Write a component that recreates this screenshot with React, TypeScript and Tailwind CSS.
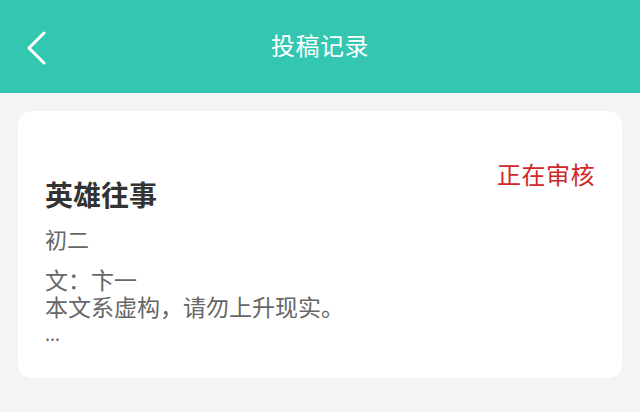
import React from 'react';

const font = { fontFamily: '"Noto Sans CJK SC", "Noto Sans", sans-serif' };

const App: React.FC = () => {
  return (
    <div className="w-[640px] h-[412px] bg-[#f4f4f4] overflow-hidden" style={font}>
      <header className="relative h-[93px] bg-[#33c7b1] flex items-center justify-center">
        <button className="absolute left-[26px] top-[31px] w-[22px] h-[34px]">
          <svg width="22" height="34" viewBox="0 0 22 34" fill="none">
            <polyline points="18,2 3,17 18,32" stroke="#fff" strokeWidth="3" strokeLinecap="round" strokeLinejoin="round" />
          </svg>
        </button>
        <h1 className="text-[24px] leading-none text-white -mt-[3px] tracking-[0.5px]">投稿记录</h1>
      </header>

      <div className="px-[18px] pt-[18px]">
        <div className="bg-white rounded-[14px] pl-[27px] pr-[27px] pt-[46px] pb-[31px]">
          <div className="flex justify-between items-start">
            <div>
              <h2 className="mt-[19px] text-[28px] leading-[36px] font-bold text-[#333]">英雄往事</h2>
              <p className="mt-[11px] text-[22px] leading-[30px] text-[#666]">初二</p>
              <div className="mt-[13px] text-[23px] leading-[27px] text-[#666]">
                <p>文：卞一</p>
                <p>本文系虚构，请勿上升现实。</p>
                <p className="text-[18px]">...</p>
              </div>
            </div>
            <span className="text-[24px] leading-[34px] text-[#d0282a] tracking-[0.5px]">正在审核</span>
          </div>
        </div>
      </div>
    </div>
  );
};

export default App;
